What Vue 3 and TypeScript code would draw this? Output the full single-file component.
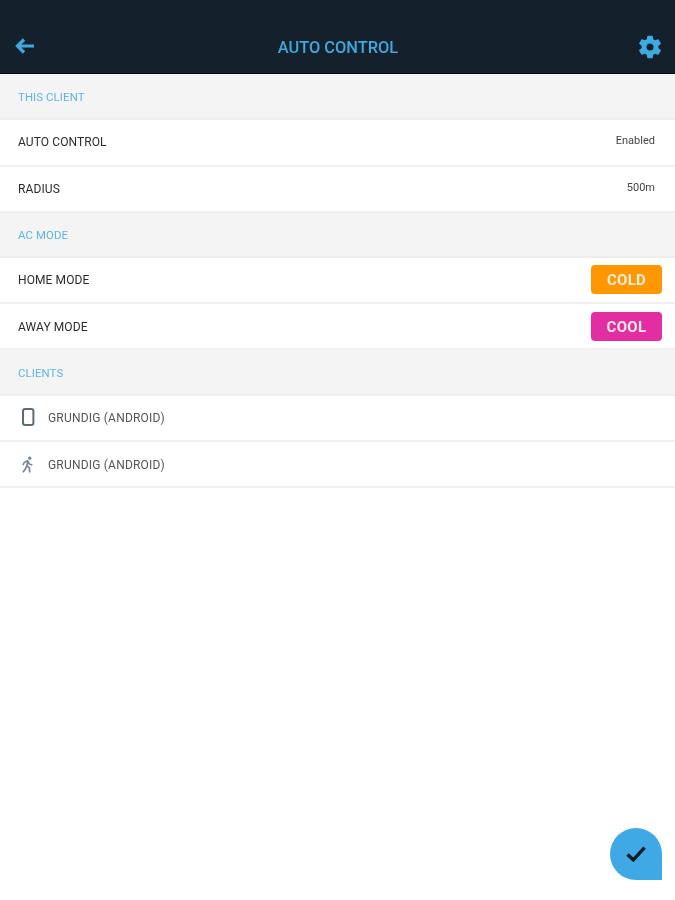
<script setup lang="ts">
interface Row { label: string; value?: string; badge?: string; badgeClass?: string; rowClass?: string }
const clientRows: Row[] = [
  { label: 'AUTO CONTROL', value: 'Enabled', rowClass: 'tall' },
  { label: 'RADIUS', value: '500m' },
]
const modeRows: Row[] = [
  { label: 'HOME MODE', badge: 'COLD', badgeClass: 'cold' },
  { label: 'AWAY MODE', badge: 'COOL', badgeClass: 'cool', rowClass: 'low' },
]
</script>

<template>
  <div class="page">
    <header class="bar">
      <svg class="back" viewBox="0 0 20 16" width="20" height="16" aria-hidden="true">
        <path d="M9 1.5 2.5 8 9 14.5M3 8h16" fill="none" stroke="#3fa9e0" stroke-width="3.2" />
      </svg>
      <h1 class="title">AUTO CONTROL</h1>
      <svg class="gear" viewBox="0 0 24 24" width="28" height="28" aria-hidden="true">
        <path fill="#3fa9e0" d="M19.14 12.94c.04-.3.06-.61.06-.94 0-.32-.02-.64-.07-.94l2.03-1.58a.49.49 0 0 0 .12-.61l-1.92-3.32a.49.49 0 0 0-.59-.22l-2.39.96c-.5-.38-1.03-.7-1.62-.94l-.36-2.54a.48.48 0 0 0-.48-.41h-3.84a.48.48 0 0 0-.47.41l-.36 2.54c-.59.24-1.13.57-1.62.94l-2.39-.96a.48.48 0 0 0-.59.22L2.74 8.87a.48.48 0 0 0 .12.61l2.03 1.58c-.05.3-.09.63-.09.94s.02.64.07.94l-2.03 1.58a.49.49 0 0 0-.12.61l1.92 3.32c.12.22.37.29.59.22l2.39-.96c.5.38 1.03.7 1.62.94l.36 2.54c.05.24.24.41.48.41h3.84c.24 0 .44-.17.47-.41l.36-2.54c.59-.24 1.13-.56 1.62-.94l2.39.96c.22.08.47 0 .59-.22l1.92-3.32a.48.48 0 0 0-.12-.61l-2.01-1.58zM12 15A3 3 0 1 1 12 9a3 3 0 0 1 0 6z" />
      </svg>
    </header>

    <section class="group first">THIS CLIENT</section>
    <div v-for="r in clientRows" :key="r.label" class="row" :class="r.rowClass">
      <span class="label">{{ r.label }}</span>
      <span class="value">{{ r.value }}</span>
    </div>

    <section class="group ac">AC MODE</section>
    <div v-for="r in modeRows" :key="r.label" class="row" :class="r.rowClass">
      <span class="label">{{ r.label }}</span>
      <span class="badge" :class="r.badgeClass">{{ r.badge }}</span>
    </div>

    <section class="group clients">CLIENTS</section>
    <div class="row client">
      <svg class="phone" viewBox="0 0 14 18" width="14" height="18" aria-hidden="true">
        <rect x="2" y="1" width="10.4" height="16" rx="2.2" fill="none" stroke="#5d6b78" stroke-width="2" />
      </svg>
      <span class="cname">GRUNDIG (ANDROID)</span>
    </div>
    <div class="row client low">
      <svg class="walker" viewBox="0 0 14 18" width="13" height="17" aria-hidden="true">
        <circle cx="9.4" cy="2.2" r="1.8" fill="#7a8692" />
        <path d="M7.6 4.8 3.6 6.6 2.2 9.6M7.6 4.8 6.2 10l2.8 2.6.4 5M7.6 5.4l1.2 3 3.4 1.2M6 10.6 4.8 14 2 17.4" fill="none" stroke="#7a8692" stroke-width="1.8" />
      </svg>
      <span class="cname">GRUNDIG (ANDROID)</span>
    </div>

    <button class="fab" type="button" aria-label="Confirm">
      <svg viewBox="0 0 24 20" width="22" height="18" aria-hidden="true">
        <path d="M2.5 10.5 9 16.5 21.5 3" fill="none" stroke="#101a24" stroke-width="3.8" />
      </svg>
    </button>
  </div>
</template>

<style>
html, body { margin: 0; background: #fff; }
</style>

<style scoped>
.page {
  position: relative;
  width: 675px;
  height: 900px;
  overflow: hidden;
  background: #fff;
  font-family: Roboto, "Liberation Sans", sans-serif;
  filter: blur(0.35px);
}
.bar {
  box-sizing: border-box;
  height: 74px;
  padding: 33px 11px 0 15px;
  display: grid;
  grid-template-columns: 1fr auto 1fr;
  align-items: start;
  background: #14212d;
  border-bottom: 1px solid #05090d;
}
.back { margin-top: 5px; }
.title {
  margin: 3px 0 0;
  font-size: 16.4px;
  line-height: 24px;
  font-weight: 500;
  color: #3fa9e0;
  transform: translateX(-1.5px);
}
.gear { justify-self: end; }
.group {
  box-sizing: border-box;
  height: 46px;
  padding: 0 18px;
  display: flex;
  align-items: center;
  background: #f4f4f4;
  border-bottom: 2px solid #ededed;
  color: #5db4e6;
  font-size: 11.4px;
  letter-spacing: 0.1px;
}
.first { padding-top: 1px; }
.ac { height: 45px; padding-top: 1px; }
.clients { padding-top: 1px; }
.row {
  box-sizing: border-box;
  height: 46px;
  padding: 0 13px 1px 18px;
  display: flex;
  align-items: center;
  justify-content: space-between;
  border-bottom: 2px solid #f0f0f0;
  background: #fff;
}
.tall { height: 47px; padding-bottom: 2px; }
.low { padding-top: 1px; padding-bottom: 0; }
.label {
  color: #2b2b2b;
  font-size: 12px;
  letter-spacing: 0.1px;
}
.value {
  margin: 0 7px 3px 0;
  color: #444;
  font-size: 11px;
}
.badge {
  box-sizing: border-box;
  width: 71px;
  height: 29px;
  border-radius: 4px;
  display: flex;
  align-items: center;
  justify-content: center;
  color: #fdeee0;
  font-size: 15px;
  font-weight: 700;
  letter-spacing: 0.3px;
}
.cold { background: #ff9800; }
.cool { background: #e22da3; }
.client { justify-content: flex-start; gap: 13px; padding-left: 21px; }
.phone { margin-bottom: 2px; }
.walker { margin: 0 1px 1px 0; }
.cname {
  color: #555;
  font-size: 12px;
  letter-spacing: 0.2px;
}
.fab {
  position: absolute;
  left: 610px;
  top: 828px;
  width: 52px;
  height: 52px;
  padding: 0;
  border: 0;
  border-radius: 50% 50% 0 50%;
  background: #3fa9e6;
  display: flex;
  align-items: center;
  justify-content: center;
}
</style>
